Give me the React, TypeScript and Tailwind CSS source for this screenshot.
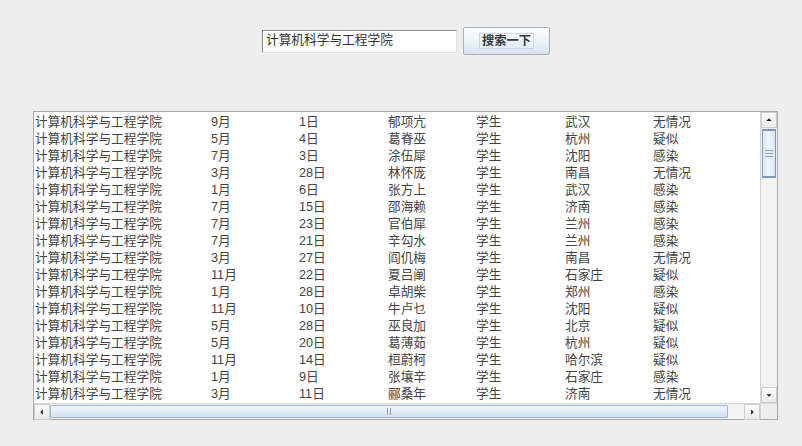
import React from "react";

const rows: string[][] = [
  ["9月", "1日", "郁项亢", "武汉", "无情况"],
  ["5月", "4日", "葛脊巫", "杭州", "疑似"],
  ["7月", "3日", "涂伍犀", "沈阳", "感染"],
  ["3月", "28日", "林怀庞", "南昌", "无情况"],
  ["1月", "6日", "张方上", "武汉", "感染"],
  ["7月", "15日", "邵海赖", "济南", "感染"],
  ["7月", "23日", "官伯犀", "兰州", "感染"],
  ["7月", "21日", "辛勾水", "兰州", "感染"],
  ["3月", "27日", "阎仉梅", "南昌", "无情况"],
  ["11月", "22日", "夏吕阐", "石家庄", "疑似"],
  ["1月", "28日", "卓胡柴", "郑州", "感染"],
  ["11月", "10日", "牛卢乜", "沈阳", "疑似"],
  ["5月", "28日", "巫良加", "北京", "疑似"],
  ["5月", "20日", "葛薄茹", "杭州", "疑似"],
  ["11月", "14日", "桓蔚柯", "哈尔滨", "疑似"],
  ["1月", "9日", "张壤辛", "石家庄", "感染"],
  ["3月", "11日", "郦桑年", "济南", "无情况"],
];

const font = { fontFamily: '"Liberation Sans", "Noto Sans CJK SC", sans-serif' };

function ArrowBtn({ dir }: { dir: "up" | "down" | "left" | "right" }) {
  const pts =
    dir === "up"
      ? "5,9 8,6 11,9"
      : dir === "down"
      ? "5,7 8,10 11,7"
      : dir === "left"
      ? "9,5 6,8 9,11"
      : "7,5 10,8 7,11";
  return (
    <div className="w-[16px] h-[16px] shrink-0 border border-[#cdcdcd] bg-gradient-to-b from-[#fbfbfb] to-[#ececec] flex items-center justify-center">
      <svg width="16" height="16" viewBox="0 0 16 16">
        <polygon points={pts} fill="#222" />
      </svg>
    </div>
  );
}

export default function App() {
  return (
    <div className="w-[802px] h-[446px] bg-[#eeeeee] text-[#444] overflow-hidden" style={font}>
      <div className="flex items-center pt-[27px] pl-[262px] gap-[6px]">
        <div className="w-[195px] h-[23px] bg-white border border-t-[#8a8a8a] border-l-[#8a8a8a] border-r-[#e2e2e2] border-b-[#e2e2e2] flex items-center pl-[3px] text-[12.7px] text-[#333]">
          计算机科学与工程学院
        </div>
        <div className="w-[87px] h-[28px] rounded-[2px] border border-[#a6aeb8] bg-gradient-to-b from-[#fdfeff] via-[#eef3f8] to-[#d6e2ee] flex items-center justify-center">
          <div className="px-[2px] h-[16px] flex items-center border border-[#c9d6e6] text-[12.3px] font-bold text-[#3a3a3a] leading-none">
            搜索一下
          </div>
        </div>
      </div>

      <div className="mt-[56px] ml-[33px] w-[745px] h-[309px] border border-[#a8a8a8] flex flex-col">
        <div className="flex h-[291px]">
          <div className="w-[726px] bg-white pt-[2px] text-[12.7px]">
            {rows.map((r, i) => (
              <div key={i} className="flex h-[17px] items-center leading-none whitespace-nowrap">
                <div className="w-[177px] pl-[1px]">计算机科学与工程学院</div>
                <div className="w-[88px]">{r[0]}</div>
                <div className="w-[89px]">{r[1]}</div>
                <div className="w-[88px]">{r[2]}</div>
                <div className="w-[89px]">学生</div>
                <div className="w-[88px]">{r[3]}</div>
                <div className="flex-1">{r[4]}</div>
              </div>
            ))}
          </div>
          <div className="flex-1 flex flex-col bg-[#f3f3f3] border-l border-[#d4d4d4]">
            <ArrowBtn dir="up" />
            <div className="flex-1 flex flex-col px-[1px]">
              <div className="h-[49px] mt-[1px] border border-[#7f95c4] border-t-2 border-b-2 bg-gradient-to-r from-[#dfe9f6] via-[#eef4fb] to-[#d9e5f4] flex flex-col items-center justify-center gap-[2px]">
                <div className="w-[8px] h-[1px] bg-[#8a9cc2]" />
                <div className="w-[8px] h-[1px] bg-[#8a9cc2]" />
                <div className="w-[8px] h-[1px] bg-[#8a9cc2]" />
              </div>
            </div>
            <ArrowBtn dir="down" />
          </div>
        </div>
        <div className="flex h-[16px] border-t border-[#d4d4d4]">
          <div className="w-[726px] flex bg-[#f3f3f3]">
            <ArrowBtn dir="left" />
            <div className="flex-1 flex py-[1px] pr-[16px]">
              <div className="flex-1 border border-[#9fb3d2] rounded-[1px] bg-gradient-to-b from-[#eef4fb] via-[#e2ebf7] to-[#d3e0f0] flex items-center justify-center gap-[2px]">
                <div className="w-[1px] h-[7px] bg-[#8a9cc2]" />
                <div className="w-[1px] h-[7px] bg-[#8a9cc2]" />
              </div>
            </div>
            <ArrowBtn dir="right" />
          </div>
          <div className="flex-1 bg-[#eeeeee] border-l border-[#d4d4d4]" />
        </div>
      </div>
    </div>
  );
}
